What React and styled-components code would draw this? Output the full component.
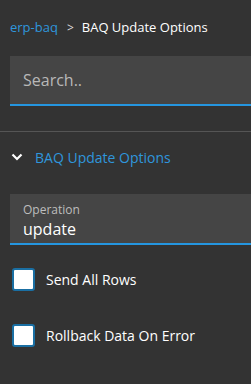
import styled, { createGlobalStyle } from "styled-components";

const Global = createGlobalStyle`
  html, body {
    margin: 0;
    background: #333333;
    font-family: "Open Sans", "Noto Sans", sans-serif;
  }
`;

const Page = styled.div`
  width: 251px;
  height: 384px;
  overflow: hidden;
  background: #333333;
`;

const Crumbs = styled.div`
  display: flex;
  align-items: center;
  height: 58px;
  padding: 0 10px;
  font-size: 13px;
  color: #fff;
  margin-top: -2px;
`;

const CrumbLink = styled.span`
  color: #2f96dc;
`;

const Sep = styled.span`
  color: #ddd;
  margin: 0 8px 0 9px;
  font-size: 12px;
`;

const Field = styled.div`
  margin-left: 10px;
  height: 50px;
  background: #454545;
  border-bottom: 2px solid #2596e0;
  display: flex;
  flex-direction: column;
  justify-content: center;
  padding-left: 13px;
  box-sizing: border-box;
`;

const LabeledField = styled(Field)`
  height: 51px;
  justify-content: flex-start;
  padding-top: 8px;
  gap: 1px;
`;

const Placeholder = styled.div`
  color: #b8b8b8;
  font-size: 16px;
`;

const Divider = styled.div`
  height: 1px;
  background: #555;
  margin-top: 25px;
`;

const Section = styled.div`
  display: flex;
  align-items: center;
  gap: 12px;
  height: 50px;
  margin-bottom: 12px;
  padding-left: 11px;
  color: #2f96dc;
  font-size: 14px;
`;

const Label = styled.div`
  color: #bdbdbd;
  font-size: 12px;
  line-height: 16px;
`;

const Value = styled.div`
  color: #fff;
  font-size: 16px;
  line-height: 20px;
`;

const Checks = styled.div`
  display: flex;
  flex-direction: column;
  gap: 33px;
  padding: 23px 0 0 12px;
`;

const CheckRow = styled.label`
  display: flex;
  align-items: center;
  gap: 11px;
  color: #fff;
  font-size: 14px;
`;

const Box = styled.span`
  width: 23px;
  height: 23px;
  box-sizing: border-box;
  border: 2px solid #1a6fa3;
  border-radius: 3px;
  background: #fff;
`;

export default function App() {
  return (
    <Page>
      <Global />
      <Crumbs>
        <CrumbLink>erp-baq</CrumbLink>
        <Sep>&gt;</Sep>
        <span>BAQ Update Options</span>
      </Crumbs>
      <Field>
        <Placeholder>Search..</Placeholder>
      </Field>
      <Divider />
      <Section>
        <svg width="12" height="8" viewBox="0 0 12 8">
          <path d="M1.5 1.5 L6 6 L10.5 1.5" fill="none" stroke="#fff" strokeWidth="2.2" />
        </svg>
        <span>BAQ Update Options</span>
      </Section>
      <LabeledField>
        <Label>Operation</Label>
        <Value>update</Value>
      </LabeledField>
      <Checks>
        <CheckRow>
          <Box />
          Send All Rows
        </CheckRow>
        <CheckRow>
          <Box />
          Rollback Data On Error
        </CheckRow>
      </Checks>
    </Page>
  );
}
